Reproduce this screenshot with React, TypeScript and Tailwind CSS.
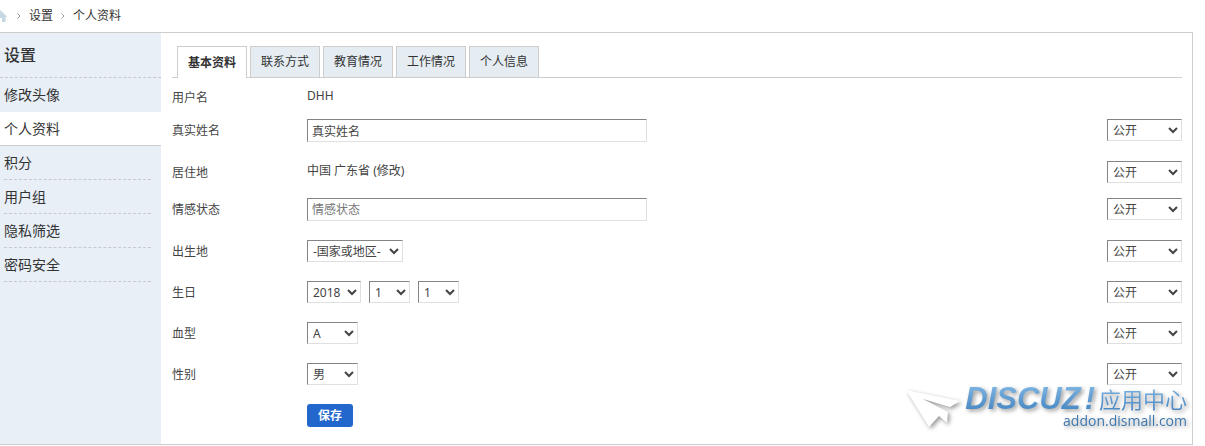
import { useState } from "react";

const menu = ["修改头像", "个人资料", "积分", "用户组", "隐私筛选", "密码安全"];

const tabs = ["基本资料", "联系方式", "教育情况", "工作情况", "个人信息"];

const fieldBorder =
  "border border-t-[#848484] border-l-[#848484] border-r-[#e0e0e0] border-b-[#e0e0e0] bg-white text-[#444]";

type SelectProps = {
  id?: string;
  label?: string;
  options: string[];
  className: string;
};

const Select = ({ id, label, options, className }: SelectProps) => {
  return (
    <select
      id={id}
      aria-label={label}
      className={`${fieldBorder} block h-[22px] p-px text-xs ${className}`}
    >
      {options.map((o) => (
        <option key={o}>{o}</option>
      ))}
    </select>
  );
};

type RowProps = {
  label: string;
  id?: string;
  height: string;
  privacy?: boolean;
  children: React.ReactNode;
};

const Row = ({ label, id, height, privacy = true, children }: RowProps) => {
  return (
    <div className={`flex items-start pt-2 ${height}`}>
      <div className="w-[135px] shrink-0 leading-6">
        {id ? <label htmlFor={id}>{label}</label> : label}
      </div>
      <div className="flex flex-1 gap-2">{children}</div>
      {privacy && (
        <Select
          label={`${label} 隐私`}
          options={["公开", "好友可见", "保密"]}
          className="w-[75px]"
        />
      )}
    </div>
  );
};

const Arrow = () => (
  <svg width="4" height="6" viewBox="0 0 4 6" fill="none" stroke="#999">
    <path d="M.5.5 3 3 .5 5.500" />
  </svg>
);

const Breadcrumb = () => {
  return (
    <nav className="flex h-8 items-center text-xs text-[#333]">
      <a href="#" aria-label="首页" className="mr-[9px]">
        <svg width="8" height="14" viewBox="8 0 8 14" fill="#c5d8e4">
          <path d="M8 1 15.500 8H13.500V13H10V9H8Z" />
        </svg>
      </a>
      <Arrow />
      <a href="#" className="mx-2">
        设置
      </a>
      <Arrow />
      <a href="#" className="ml-2">
        个人资料
      </a>
    </nav>
  );
};

const Sidebar = ({ active, onChange }: { active: string; onChange: (m: string) => void }) => {
  return (
    <aside className="w-[161px] shrink-0 bg-[#e8eff7] text-[#333]">
      <h2 className="h-[45px] border-b border-dashed border-[#c5cad0] pl-1 text-base leading-[44px] font-medium">
        设置
      </h2>
      <ul className="text-sm leading-[33px]">
        {menu.map((m, i) => {
          const on = m === active;
          const beforeActive = menu[i + 1] === active;
          return (
            <li
              key={m}
              className={
                on
                  ? "h-[34px] border-b border-[#cdcdcd] bg-white pl-1"
                  : "h-[34px] pr-[10px] pl-1"
              }
            >
              <a
                href="#"
                onClick={() => onChange(m)}
                className={
                  on || beforeActive
                    ? "block"
                    : "block h-[34px] border-b border-dashed border-[#c5cad0]"
                }
              >
                {m}
              </a>
            </li>
          );
        })}
      </ul>
    </aside>
  );
};

const Watermark = () => {
  return (
    <div className="pointer-events-none absolute right-[5px] bottom-[14px] flex items-start gap-1 drop-shadow-[2px_2px_2px_rgba(0,0,0,0.4)]">
      <svg width="56" height="40" viewBox="0 0 56 40" className="mt-1" fill="#fff">
        <path d="M1 1 55 12 45 18 18 10 43 23 42 34 34 27 24 38Z" />
      </svg>
      <div className="text-right">
        <div className="flex h-[27px] items-center bg-linear-to-b from-[#7eb5e2] to-[#4585c2] bg-clip-text text-transparent">
          <span className="font-['Liberation_Sans'] text-[31px] leading-7 font-bold italic">DISCUZ</span>
          <span className="ml-1 font-['Liberation_Sans'] text-[31px] leading-7 font-bold italic">!</span>
          <span className="ml-1 text-[22px] leading-6">应用中心</span>
        </div>
        <div className="font-['Open_Sans'] text-sm leading-[18px] text-[#3d78b0]">addon.dismall.com</div>
      </div>
    </div>
  );
};

const App = () => {
  const [page, setPage] = useState("个人资料");
  const [tab, setTab] = useState("基本资料");

  return (
    <div className="overflow-hidden bg-white pr-3 font-['Noto_Sans','Noto_Sans_CJK_SC',sans-serif] text-xs text-[#444]">
      <Breadcrumb />
      <div className="relative flex border border-l-0 border-[#cdcdcd]">
        <Sidebar active={page} onChange={setPage} />
        <main className="flex-1 pt-[13px] pr-[10px] pb-2 pl-[11px]">
          <div className="flex h-8 gap-[3px] border-b border-[#cdcdcd] pl-[5px]">
            {tabs.map((t) => (
              <button
                key={t}
                type="button"
                onClick={() => setTab(t)}
                className={
                  t === tab
                    ? "h-8 w-[70px] border border-b-0 border-[#cdcdcd] bg-white font-bold text-[#333]"
                    : "h-8 w-[70px] border border-[#cdcdcd] bg-[#e5edf2] text-[#333]"
                }
              >
                {t}
              </button>
            ))}
          </div>

          <form onSubmit={(e) => e.preventDefault()}>
            <Row label="用户名" height="h-[33px]" privacy={false}>
              <span className="leading-5">DHH</span>
            </Row>
            <Row label="真实姓名" id="realname" height="h-[42px]">
              <input
                id="realname"
                defaultValue="真实姓名"
                className={`${fieldBorder} h-[23px] w-[340px] px-1`}
              />
            </Row>
            <Row label="居住地" height="h-[37px]">
              <span className="leading-5">
                中国 广东省 (<a href="#">修改</a>)
              </span>
            </Row>
            <Row label="情感状态" id="affective" height="h-[42px]">
              <input
                id="affective"
                placeholder="情感状态"
                className={`${fieldBorder} h-[23px] w-[340px] px-1 placeholder:text-[#777]`}
              />
            </Row>
            <Row label="出生地" id="birthplace" height="h-[41px]">
              <Select id="birthplace" options={["-国家或地区-", "中国"]} className="w-24" />
            </Row>
            <Row label="生日" id="birthyear" height="h-[41px]">
              <Select id="birthyear" options={["2018", "2017", "2016"]} className="w-[54px]" />
              <Select label="月" options={["1", "2", "3"]} className="w-[41px]" />
              <Select label="日" options={["1", "2", "3"]} className="w-[41px]" />
            </Row>
            <Row label="血型" id="bloodtype" height="h-[41px]">
              <Select id="bloodtype" options={["A", "B", "AB", "O"]} className="w-[51px]" />
            </Row>
            <Row label="性别" id="gender" height="h-[41px]">
              <Select id="gender" options={["男", "女", "保密"]} className="w-[51px]" />
            </Row>
            <Row label="" height="h-[40px]" privacy={false}>
              <button type="submit" className="h-[23px] w-[46px] rounded-[3px] bg-[#2366cc] font-bold text-white">
                保存
              </button>
            </Row>
          </form>
        </main>
        <Watermark />
      </div>
    </div>
  );
};

export default App;
